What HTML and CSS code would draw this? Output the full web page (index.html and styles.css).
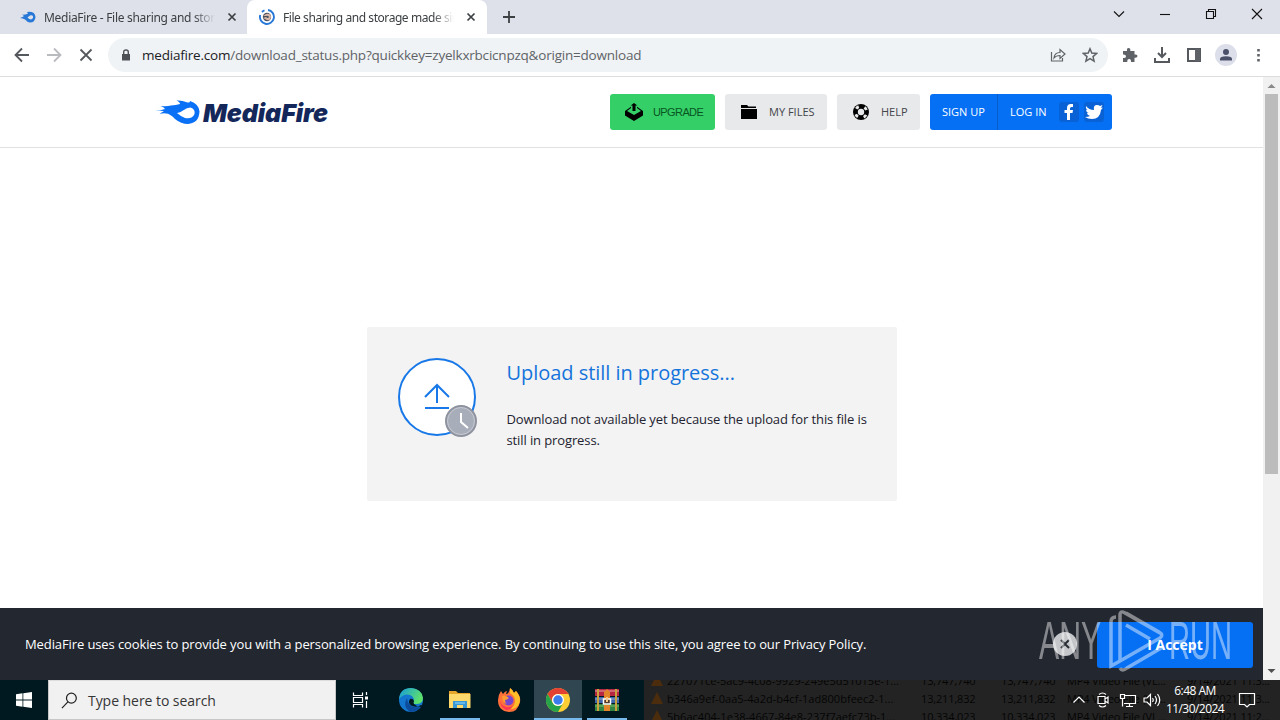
FILE: index.html
```html
<!DOCTYPE html>
<html lang="en">
<head>
  <meta charset="UTF-8">
  <title>File sharing and storage made simple</title>
  <link rel="stylesheet" href="styles.css">
</head>
<body>
  <!-- Tab strip -->
  <div class="tabstrip">
    <div class="tab">
      <svg class="favicon" viewBox="0 0 16 16"><path fill="#2878d8" fill-rule="evenodd" d="M0 9Q3 8 4 7L2 5.500Q6 6 8 4.500L7 3Q15 2 15.500 8Q15 13.500 10 13.500Q7 13 5 10.500Q3 9 0 9ZM7.500 8.500Q11 12 13 9Q13.500 5.500 10.500 6.300Q9 7 7.500 8.500Z"/></svg>
      <span class="tab-title">MediaFire - File sharing and storage</span>
      <svg class="tab-close" viewBox="0 0 10 10"><path d="M1.5 1.5 8.5 8.5M8.5 1.5 1.5 8.5"/></svg>
    </div>
    <div class="tab active">
      <svg class="favicon" viewBox="0 0 16 16"><path fill="none" stroke="#2878d8" stroke-width="1.9" d="M9 1A7 7 0 1 1 1.200 6M3 3A7 7 0 0 1 5.500 1.400"/><circle cx="8" cy="8" r="4.200" fill="#4a5260"/><path d="M4 7 7 5Q12 4 12 8Q11 12 8 11Q6 10 4 9L7 8Q9 10 10 8Q9 6 7 7Z" fill="#d9b6a8"/></svg>
      <span class="tab-title">File sharing and storage made simple</span>
      <svg class="tab-close" viewBox="0 0 10 10"><path d="M1.5 1.5 8.5 8.5M8.5 1.5 1.5 8.5"/></svg>
    </div>
    <svg class="new-tab" viewBox="0 0 14 14"><path d="M7 1V13M1 7H13"/></svg>
    <div class="window-buttons">
      <svg viewBox="0 0 12 12"><path d="M1 3.5 6 8.5 11 3.5"/></svg>
      <svg viewBox="0 0 12 12"><path d="M1 6.5H11"/></svg>
      <svg viewBox="0 0 12 12"><path d="M1.5 3.5H8.5V10.5H1.5ZM3.5 3.5V1.5H10.5V8.5H8.5"/></svg>
      <svg viewBox="0 0 12 12"><path d="M1 1 11 11M11 1 1 11"/></svg>
    </div>
  </div>

  <!-- Address bar -->
  <div class="toolbar">
    <div class="nav-buttons">
      <svg viewBox="0 0 16 16"><path d="M15 8H2M8 1.5 1.5 8 8 14.5"/></svg>
      <svg class="disabled" viewBox="0 0 16 16"><path d="M1 8H14M8 1.5 14.5 8 8 14.5"/></svg>
      <svg viewBox="0 0 16 16"><path d="M2.5 2.5 13.5 13.5M13.5 2.5 2.5 13.5"/></svg>
    </div>
    <div class="omnibox">
      <svg class="lock" viewBox="0 0 10 12"><path d="M1 5H9V11.5H1Z" fill="#4d5156"/><path d="M2.7 5V3Q2.7 1 5 1Q7.300 1 7.300 3V5" fill="none" stroke="#4d5156" stroke-width="1.4"/></svg>
      <span class="url"><span class="host">mediafire.com</span>/download_status.php?quickkey=zyelkxrbcicnpzq&amp;origin=download</span>
      <svg class="line-icon" viewBox="0 0 16 16"><path d="M1.5 5V14H12.5V11M4 11Q4.500 5.500 10 5.500V2.500L15 7 10 11.500V8.500Q6 8.500 4 11Z"/></svg>
      <svg class="line-icon star" viewBox="0 0 16 16"><path d="M8 1.800 9.800 6.100 14.500 6.500 11 9.600 12.100 14.200 8 11.700 3.900 14.200 5 9.600 1.500 6.500 6.200 6.100Z"/></svg>
    </div>
    <div class="toolbar-icons">
      <svg viewBox="0 0 16 16"><path fill="#5f6368" d="M1 4H5Q4.500 1 6.500 1Q8.800 1 8.300 4H12.500V7.500Q15.500 7 15.500 9Q15.500 11.200 12.500 10.700V15H9Q9.200 12 7.200 12Q5 12 5.300 15H1V11Q4 11.300 4 9.200Q4 7.300 1 7.500Z"/></svg>
      <svg viewBox="0 0 16 16"><path class="stroke" d="M8 0V10M4 6 8 10 12 6M1 11V15H15V11"/></svg>
      <svg viewBox="0 0 16 16"><path class="stroke" d="M2 2H14V14H2Z"/><path fill="#5f6368" d="M9 2H14V14H9Z"/></svg>
      <svg class="avatar" viewBox="0 0 22 22"><circle cx="11" cy="11" r="11" fill="#dcdfea"/><circle cx="11" cy="8" r="3" fill="#4a5068"/><path d="M5 16.5V15Q5 12.300 11 12.300T17 15V16.500Z" fill="#4a5068"/></svg>
      <svg viewBox="0 0 16 16"><path fill="#5f6368" d="M7.200 2H9.800V4.600H7.200ZM7.200 7H9.800V9.600H7.200ZM7.200 12H9.800V14.600H7.200Z"/></svg>
    </div>
  </div>

  <!-- Web page -->
  <div class="viewport">
    <div class="page">
      <header class="header">
        <a class="logo">
          <svg viewBox="0 0 46 26"><path fill="#0a70f5" fill-rule="evenodd" d="M0 12Q6 11.500 10 10Q9 8 5.500 7Q12 7.500 16 6.500Q21 6 25 5Q25 3 21.500 1.500Q27 1 31 3Q35 4.500 35 2Q44 5 44.500 12.500Q44 24 33 25Q26 25 20 20Q15 14.500 11 14.500Q8 14 4.500 15Q8 12.500 9 12Q5 11.500 0 12ZM22 14Q26 17.500 30 19Q37 20.500 39.500 15Q40.500 10 35.500 8.500Q32 8.500 28 11.500Q25 13.500 22 14Z"/></svg>
          <span>MediaFire</span>
        </a>
        <nav class="nav">
          <a class="btn upgrade">
            <svg viewBox="0 0 18 18"><path d="M7.500 2.500H5.700L9 0 12.300 2.500H10.500V8H7.500ZM6 5 2 8 9 12 16 8 12 5V3.800L18 8V12.500L9 18 0 12.500V8L6 3.800Z"/></svg>
            <span>UPGRADE</span>
          </a>
          <a class="btn files">
            <svg viewBox="0 0 18 18"><path d="M1 2H7L8.500 3.500H16V5H1ZM1 6H17V16H1Z"/></svg>
            <span>MY FILES</span>
          </a>
          <a class="btn help">
            <svg viewBox="0 0 18 18"><circle cx="9" cy="9" r="8"/><circle cx="9" cy="9" r="3.200" fill="#e8e9ea"/><circle cx="9" cy="9" r="5.800" fill="none" stroke="#e8e9ea" stroke-width="2.800" stroke-dasharray="3.100 6.010" stroke-dashoffset="-3"/></svg>
            <span>HELP</span>
          </a>
          <div class="account">
            <a class="signup"><span>SIGN UP</span></a>
            <a class="login"><span>LOG IN</span>
              <svg viewBox="0 0 20 20"><rect width="20" height="20" rx="3" fill="#0862d6"/><path fill="#fff" d="M8 18V11H5.500V8H8V6Q8 2 12 2H14V5H12.500Q11 5 11 6.500V8H14L13.500 11H11V18Z"/></svg>
              <svg viewBox="0 0 20 20"><rect width="20" height="20" rx="3" fill="#0862d6"/><path fill="#fff" d="M2 4Q5 8 10 8Q9 3 13 3Q15 3 16 4L18.500 3L17 6L19 5.500L17 8Q16 17 8 17Q4 17 1 15Q4 15 6 14Q3 13 3 11H4.500Q2 10 2 7.500L3.500 8Q1 6 2 4Z"/></svg>
            </a>
          </div>
        </nav>
      </header>

      <main class="content">
        <div class="notice">
          <svg class="notice-icon" viewBox="0 0 80 80"><circle cx="39" cy="39" r="38" fill="#fff" stroke="#1878e8" stroke-width="2"/><path d="M39 45V28M27 39 39 27 51 39M27 50H51" fill="none" stroke="#1878e8" stroke-width="2"/><circle cx="63" cy="63" r="15" fill="#a8adba" stroke="#8d929e" stroke-width="2"/><circle cx="63" cy="63" r="13.500" fill="none" stroke="#c7cad2"/><path d="M63 55V64L70 70" fill="none" stroke="#fff" stroke-width="2"/></svg>
          <div class="notice-body">
            <h1>Upload still in progress...</h1>
            <p>Download not available yet because the upload for this file is<br>still in progress.</p>
          </div>
        </div>
      </main>

      <div class="cookie-bar">
        <p>MediaFire uses cookies to provide you with a personalized browsing experience. By continuing to use this site, you agree to our Privacy Policy.</p>
        <svg class="dismiss" viewBox="0 0 24 24"><circle cx="12" cy="12" r="12"/><path d="M8 8 16 16M16 8 8 16"/></svg>
        <button class="accept">I Accept</button>
      </div>
    </div>
    <div class="scrollbar">
      <svg viewBox="0 0 17 17"><path d="M4.500 11 8.500 7 12.500 11Z" fill="#8a8a8a"/></svg>
      <div class="thumb"></div>
      <svg class="down" viewBox="0 0 17 17"><path d="M4.500 6 8.500 10 12.500 6Z" fill="#505050"/></svg>
    </div>
  </div>

  <!-- Windows taskbar -->
  <div class="taskbar">
    <div class="start"><svg viewBox="0 0 16 16"><path fill="#fff" d="M0 2.200 6.500 1.300V7.500H0ZM7.300 1.200 16 0V7.500H7.300ZM0 8.400H6.500V14.700L0 13.800ZM7.300 8.400H16V16L7.300 14.800Z"/></svg></div>
    <div class="search">
      <svg viewBox="0 0 18 18"><circle cx="11" cy="6.500" r="5.200"/><path d="M7.300 10.500 1 17"/></svg>
      <span>Type here to search</span>
    </div>
    <div class="apps">
      <div class="app taskview"><svg viewBox="0 0 18 18"><path fill="none" stroke="#fff" stroke-width="1.200" d="M2.500 1.500V4.500H11.500V1.500M2.500 16.500V13.500H11.500V16.500M2.500 6.500H11.500V11.500H2.500ZM15.500 1V4M15.500 10V17"/><path fill="#fff" d="M14 5.500H17V8.500H14Z"/></svg></div>
      <div class="app"><svg viewBox="0 0 24 24">
        <defs><linearGradient id="edge" x1="0" y1="0" x2="1" y2=".4"><stop stop-color="#159bdc"/><stop offset="1" stop-color="#5ee06c"/></linearGradient></defs>
        <circle cx="12" cy="12" r="12" fill="#1377cf"/><path fill="url(#edge)" d="M0 11Q1 0 12 0Q23 1 24 10Q24 16 17 16Q13 16 14.500 14Q16 9 11 7Q5 5 0 11Z"/><path fill="#0d4c9c" d="M8 10Q3 18 11 24Q18 24 22 18Q15 21 11 17Q8 14 8 10Z"/><path fill="#001820" d="M11 11Q8 15 13 18Q18 20 22 17Q24 17 22 19Q18 19 15 16Q14 15 15 13Q14 10 11 11Z"/></svg></div>
      <div class="app running"><svg viewBox="0 0 24 24"><path fill="#e8a52b" d="M1 3H8L10 5H22V20H1Z"/><path fill="#ffd96b" d="M1 6H22.500V20H1Z"/><path fill="#3997d3" d="M5 20V13H19V20H15V17H9V20Z"/><path fill="#65b9e9" d="M7 14H17V16H7Z"/></svg></div>
      <div class="app"><svg viewBox="0 0 24 24"><path fill="#ff7139" d="M1 12Q1 7 4 3L6 6Q8 3 10 3L9 6Q12 6 13 0Q16 2 17 5L19 3Q24 8 23 14Q21 24 12 24Q1 23 1 12Z"/><path fill="#ffbd28" d="M13 0Q16 2 17 5L19 3Q25 10 22 16Q18 23 11 20Q18 20 18 13Q18 8 13 5Z"/><path fill="#ff3557" d="M2 10Q3 17 9 19Q14 20 16 17Q15 22 9 22Q3 19 2 10Z"/><circle cx="11.500" cy="12.500" r="5" fill="#7545cf"/><path fill="#ff9b31" d="M5 8Q9 7 12 10Q10 12 8 12Q8 15 10 16Q5 15 5 8Z"/></svg></div>
      <div class="app running current"><svg viewBox="0 0 24 24"><circle cx="12" cy="12" r="12" fill="#ffce34"/><path fill="#e34133" d="M1.600 6A12 12 0 0 1 22.400 6H12A6 6 0 0 0 6.800 15Z"/><path fill="#27a34a" d="M1.600 6A12 12 0 0 0 12 24L17.200 15A6 6 0 0 1 6.800 15Z"/><circle cx="12" cy="12" r="6" fill="#fff"/><circle cx="12" cy="12" r="4.700" fill="#3b7ded"/></svg></div>
      <div class="app running"><svg viewBox="0 0 24 24"><path fill="#b72743" d="M0 1H24V8H0Z"/><path fill="#3e65a9" d="M0 9H24V15H0Z"/><path fill="#318443" d="M0 16H24V23H0Z"/><path stroke="#e8a5a4" d="M0 3H24"/><path stroke="#8ea8cf" d="M0 11H24"/><path stroke="#83bd6f" d="M0 18H24"/><path fill="#c9a13f" d="M2 1H4V23H2ZM20 1H22V23H20Z"/><path fill="#e2852a" d="M9 4 12 1 15 4V11H9ZM9 17H15V23H9Z"/><path fill="#533a29" stroke="#fff" stroke-width="1.500" d="M8.500 11H15.500V16H8.500Z"/><path fill="#f4c98a" d="M11 9H13V14H11Z"/></svg></div>
    </div>
    <div class="desktop">
      <!-- file list dimmed behind the taskbar -->
      <div class="file-list">
        <div class="file-row"><i></i><span class="name">227071ce-5ac9-4c08-9929-249e5d51015e-1...</span><span>13,747,740</span><span>13,747,740</span><span>MP4 Video File (VL...</span><span>9/14/2021 11:3...</span></div>
        <div class="file-row"><i></i><span class="name">b346a9ef-0aa5-4a2d-b4cf-1ad800bfeec2-1...</span><span>13,211,832</span><span>13,211,832</span><span>MP4 Video File (VL...</span><span>9/14/2021 11:3...</span></div>
        <div class="file-row"><i></i><span class="name">5b6ac404-1e38-4667-84e8-237f7aefc73b-1...</span><span>10,334,023</span><span>10,334,023</span><span>MP4 Video File (VL...</span><span>9/14/2021 11:2...</span></div>
      </div>
      <div class="tray">
        <svg viewBox="0 0 16 16"><path d="M2.500 10.500 8 5 13.500 10.500"/></svg>
        <svg viewBox="0 0 16 16"><path d="M3 4.500H10V11.500H3ZM10 7 13 5V11L10 9M4 2.500Q7.500-.5 11 2.500M4 13.500Q7.500 16.500 11 13.500"/></svg>
        <svg class="network" viewBox="0 0 18 16"><path d="M6 3.500H16.500V11.500H5M10.500 11.500V14.500M7 14.500H14M1.500 2.500H5.500V6.500H1.500ZM3.500 6.500V14.500"/></svg>
        <svg class="volume" viewBox="0 0 18 16"><path d="M1 6H4L7.500 2.500V13.500L4 10H1ZM9.500 6Q11 8 9.500 10M12 4Q15 8 12 12M14.500 2Q19 8 14.500 14"/></svg>
        <div class="clock"><span>6:48 AM</span><span>11/30/2024</span></div>
        <svg class="action-center" viewBox="0 0 18 18"><path d="M1.500 2.500H16.500V13.500H11.500L9 16 6.500 13.500H1.500Z"/></svg>
      </div>
    </div>
  </div>

  <!-- Recording watermark -->
  <div class="watermark">
    <span>ANY</span>
    <svg viewBox="0 0 58 64"><path d="M3 49V13Q3 8 8 8M12 49V6Q12 1 17 4L52 24M12 18V52L52 29Q56 26 51 23L18 4M18 16 42 30M3 49V57L12 52M12 59Q14 63 19 59L55 38"/></svg>
    <span class="run">RUN</span>
  </div>
</body>
</html>
```
FILE: styles.css
```css
* {
  box-sizing: border-box;
}
body {
  margin: 0;
  width: 1280px;
  height: 720px;
  overflow: hidden;
  position: relative;
  display: flex;
  flex-direction: column;
  background: #fff;
  font-family: "Open Sans", "Noto Sans", sans-serif;
}
svg {
  display: block;
  flex-shrink: 0;
}
span, p {
  white-space: nowrap;
}

/* tab strip */
.tabstrip {
  height: 34px;
  flex-shrink: 0;
  display: flex;
  align-items: center;
  background: #dee1e9;
}
.tab {
  width: 247px;
  height: 34px;
  display: flex;
  align-items: center;
  padding-left: 20px;
}
.tab.active {
  width: 240px;
  padding-left: 12px;
  background: #fff;
  border-radius: 8px 8px 0 0;
}
.favicon {
  width: 16px;
  height: 16px;
  margin-right: 8px;
}
.tab-title {
  width: 171px;
  overflow: hidden;
  font-family: "Noto Sans", sans-serif;
  font-size: 12px;
  letter-spacing: -0.3px;
  color: #3c4043;
  -webkit-mask-image: linear-gradient(90deg, #000 150px, transparent);
  mask-image: linear-gradient(90deg, #000 150px, transparent);
}
.active .tab-title {
  letter-spacing: -0.44px;
}
.tab-close {
  width: 10px;
  height: 10px;
  margin-left: 12px;
  stroke: #3c4043;
  stroke-width: 1.7;
}
.new-tab {
  width: 14px;
  margin-left: 15px;
  stroke: #3c4043;
  stroke-width: 1.8;
}
.window-buttons {
  margin-left: auto;
  margin-right: 17px;
  display: flex;
  gap: 34px;
}
.window-buttons svg {
  width: 12px;
  height: 12px;
  margin-top: -6px;
  fill: none;
  stroke: #111;
  stroke-width: 1.1;
}

/* address bar */
.toolbar {
  height: 43px;
  flex-shrink: 0;
  display: flex;
  align-items: center;
  border-bottom: 1px solid #dcdddf;
}
.nav-buttons {
  width: 108px;
  display: flex;
  gap: 16px;
  padding-left: 14px;
}
.nav-buttons svg {
  width: 16px;
  height: 16px;
  fill: none;
  stroke: #55585d;
  stroke-width: 1.8;
}
.nav-buttons .disabled {
  stroke: #b9bbbe;
}
.omnibox {
  width: 1000px;
  height: 34px;
  display: flex;
  align-items: center;
  padding: 0 10px 0 13px;
  border-radius: 17px;
  background: #f0f3f5;
}
.lock {
  width: 10px;
  height: 12px;
}
.url {
  flex: 1;
  margin-left: 11px;
  font-size: 13.5px;
  letter-spacing: -0.21px;
  color: #5f6368;
}
.host {
  color: #202124;
}
.line-icon {
  width: 16px;
  height: 16px;
  margin-left: 16px;
  fill: none;
  stroke: #5f6368;
  stroke-width: 1.2;
}
.star {
  stroke-width: 1.5;
}
.toolbar-icons {
  display: flex;
  align-items: center;
  gap: 16px;
  padding-left: 14px;
}
.toolbar-icons svg {
  width: 16px;
  height: 16px;
}
.toolbar-icons .avatar {
  width: 22px;
  height: 22px;
  margin: 0 -3px;
}
.stroke {
  fill: none;
  stroke: #55595e;
  stroke-width: 2;
}

/* page */
.viewport {
  height: 603px;
  flex-shrink: 0;
  display: flex;
}
.page {
  width: 1263px;
  display: flex;
  flex-direction: column;
}
.header {
  height: 71px;
  display: flex;
  align-items: center;
  justify-content: space-between;
  padding: 0 151px 0 155px;
  border-bottom: 1px solid #dfe1e3;
}
.logo {
  display: flex;
  align-items: center;
  gap: 2px;
}
.logo svg {
  width: 46px;
  height: 26px;
}
.logo span {
  padding-top: 1px;
  font: italic 900 25px Inter, sans-serif;
  color: #14275a;
  letter-spacing: -0.1px;
}
.nav {
  display: flex;
  gap: 10px;
  font-size: 11px;
}
.btn {
  height: 36px;
  display: flex;
  align-items: center;
  gap: 10px;
  padding-left: 15px;
  border-radius: 3px;
  background: #e8e9ea;
  color: #43464b;
}
.btn svg {
  width: 18px;
  height: 18px;
}
.btn span, .account span {
  padding-bottom: 2px;
}
.upgrade {
  width: 105px;
  background: #35cf68;
  color: #08551f;
  font-family: "Liberation Sans", Arial, sans-serif;
  letter-spacing: -0.6px;
}
.btn.upgrade span {
  padding-bottom: 0;
}
.files {
  width: 102px;
  gap: 11px;
}
.help {
  width: 83px;
  gap: 11px;
}
.account {
  width: 182px;
  height: 36px;
  display: flex;
  border-radius: 3px;
  background: #0670f5;
  color: #fff;
}
.signup, .login {
  display: flex;
  align-items: center;
  padding-left: 12px;
}
.signup {
  width: 68px;
  border-right: 1px solid #075cca;
}
.login {
  gap: 5px;
}
.login span {
  width: 44px;
}
.login svg {
  width: 20px;
  height: 20px;
}
.content {
  height: 460px;
  display: flex;
  justify-content: center;
  align-items: flex-start;
  padding-top: 179px;
}
.notice {
  width: 530px;
  height: 174px;
  display: flex;
  gap: 29px;
  padding: 31px 28px 0 31px;
  border-radius: 2px;
  background: #f3f3f3;
}
.notice-icon {
  width: 80px;
  height: 80px;
}
.notice-body {
  padding-top: 1px;
}
.notice h1 {
  margin: 0;
  font-size: 20px;
  line-height: 28px;
  font-weight: 400;
  letter-spacing: -0.04px;
  color: #1574dc;
}
.notice p {
  margin: 22px 0 0;
  font-size: 13px;
  line-height: 21px;
  letter-spacing: -0.11px;
  color: #222230;
}
.cookie-bar {
  height: 72px;
  display: flex;
  align-items: center;
  padding: 0 10px 0 25px;
  background: #222730;
  color: #fff;
}
.cookie-bar p {
  flex: 1;
  margin: 0;
  font-size: 13px;
  letter-spacing: -0.105px;
}
.dismiss {
  width: 24px;
  height: 24px;
  margin-right: 20px;
  fill: #c4c6c9;
  stroke: #272c33;
  stroke-width: 2;
}
.dismiss circle {
  stroke: none;
}
.accept {
  width: 156px;
  height: 46px;
  margin-top: 1px;
  padding: 0;
  border: 0;
  border-radius: 3px;
  background: #0670f5;
  color: #fff;
  font: bold 14px "Open Sans", sans-serif;
}
.scrollbar {
  width: 17px;
  display: flex;
  flex-direction: column;
  background: #f1f1f1;
}
.thumb {
  width: 13px;
  height: 380px;
  margin-left: 2px;
  background: #bcbcbc;
}
.down {
  margin-top: auto;
}

/* taskbar */
.taskbar {
  height: 40px;
  flex-shrink: 0;
  display: flex;
  background: #001820;
}
.start {
  width: 48px;
  display: grid;
  place-items: center;
}
.start svg {
  width: 16px;
}
.search {
  width: 288px;
  display: flex;
  align-items: center;
  gap: 10px;
  padding-left: 12px;
  background: #f1f1f1;
  border: 1px solid #c7c7c7;
  border-top-color: #ddd;
  font-size: 14px;
  letter-spacing: -0.05px;
  color: #353535;
}
.search svg {
  width: 17px;
  fill: none;
  stroke: #222;
  stroke-width: 1.3;
}
.apps {
  width: 308px;
  display: flex;
  gap: 1px;
}
.app {
  width: 48px;
  display: flex;
  align-items: center;
  justify-content: center;
  position: relative;
}
.app svg {
  width: 24px;
  height: 24px;
}
.taskview {
  width: 50px;
  padding-right: 3px;
}
.taskview svg {
  width: 18px;
  height: 18px;
}
.running::after {
  content: "";
  position: absolute;
  bottom: 0;
  left: 4px;
  right: 4px;
  height: 2px;
  background: #76b9ed;
}
.current {
  background: #304650;
}
.current::after {
  left: 0;
  right: 0;
}
.desktop {
  width: 636px;
  overflow: hidden;
  position: relative;
  background: #232323;
}
.file-list {
  margin-top: -9px;
  font-size: 11px;
  letter-spacing: -0.15px;
  color: #050505;
}
.file-row {
  height: 18px;
  display: grid;
  grid-template-columns: 23px 254px 80px 66px 120px 92px;
  align-items: center;
}
.file-row .name {
  letter-spacing: 0.03px;
}
.file-row i {
  width: 12px;
  height: 12px;
  margin-left: 7px;
  background: #4b2c0c;
  clip-path: polygon(50% 0, 100% 100%, 0 100%);
}
.tray {
  position: absolute;
  right: 0;
  top: 0;
  height: 40px;
  display: flex;
  align-items: center;
  gap: 8px;
  padding-right: 24px;
  color: #fff;
}
.tray svg {
  width: 16px;
  height: 16px;
  fill: none;
  stroke: #fff;
  stroke-width: 1.2;
}
.tray .network, .tray .volume {
  width: 18px;
}
.tray .volume {
  margin-left: -2px;
}
.clock {
  width: 60px;
  margin-left: -4px;
  display: flex;
  flex-direction: column;
  align-items: center;
  font-size: 12px;
  line-height: 18px;
  letter-spacing: -0.55px;
}
.tray .action-center {
  width: 18px;
  height: 18px;
  margin-left: 5px;
}

/* watermark floats over the cookie bar */
.watermark {
  position: absolute;
  left: 1039px;
  top: 609px;
  height: 64px;
  display: flex;
  align-items: center;
  color: #fff;
  opacity: 0.45;
}
.watermark span {
  width: 64px;
  font: 53px/64px "Liberation Sans", sans-serif;
  transform: scaleX(0.57);
  transform-origin: left;
}
.watermark svg {
  width: 58px;
  height: 64px;
  margin-left: 5px;
  fill: none;
  stroke: #fff;
  stroke-width: 3.5;
}
.watermark .run {
  margin-left: 3px;
  transform: scaleX(0.55);
}
```
